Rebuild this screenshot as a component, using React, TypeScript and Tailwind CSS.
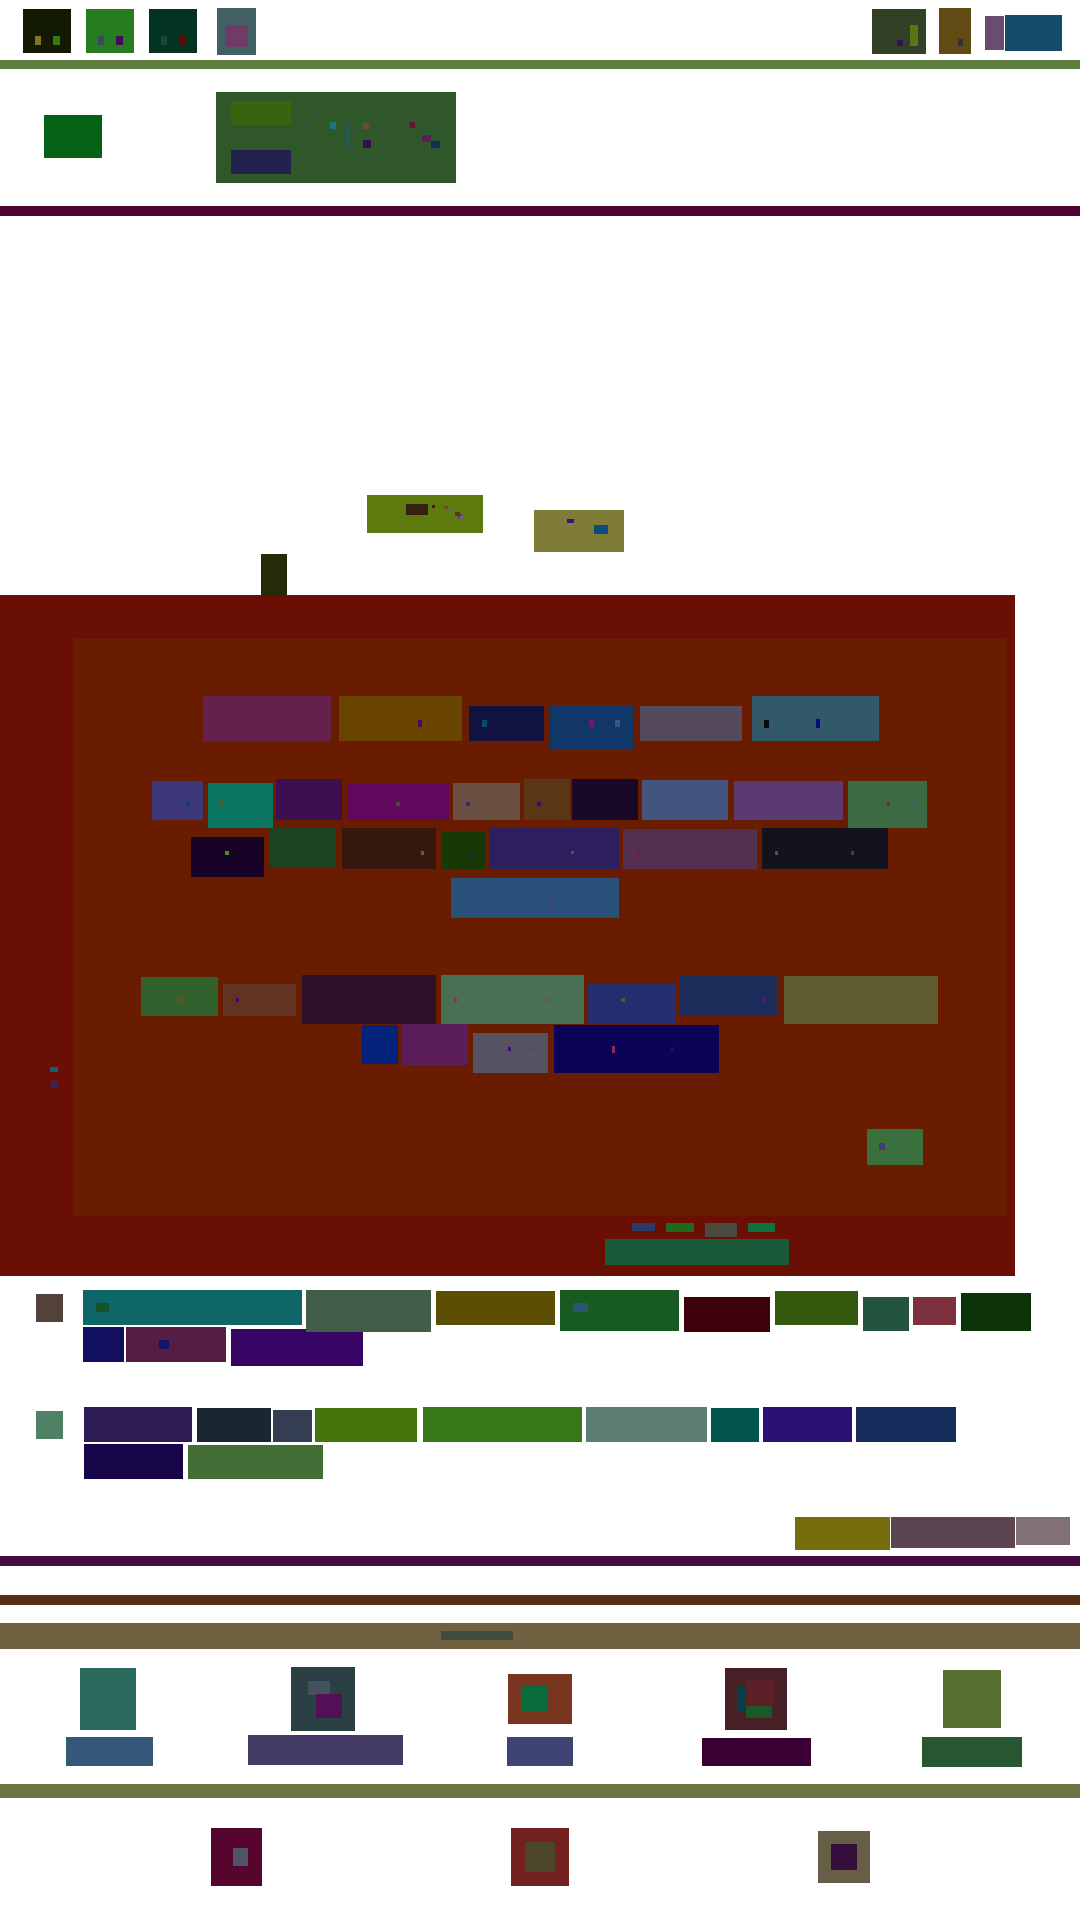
function TopBar() {
  return (
    <div className="flex h-[60px] items-start">
      <div className="relative mt-[9px] ml-[23px] h-[44px] w-[48px] bg-[#121a03]">
        <div className="absolute top-[27px] left-[12px] h-[9px] w-[6px] bg-[#7f7428]" />
        <div className="absolute top-[27px] left-[30px] h-[9px] w-[7px] bg-[#367a0c]" />
      </div>
      <div className="relative mt-[9px] ml-[15px] h-[44px] w-[48px] bg-[#257d1f]">
        <div className="absolute top-[27px] left-[12px] h-[9px] w-[6px] bg-[#3e4760]" />
        <div className="absolute top-[27px] left-[30px] h-[9px] w-[7px] bg-[#420b5c]" />
      </div>
      <div className="relative mt-[9px] ml-[15px] h-[44px] w-[48px] bg-[#033323]">
        <div className="absolute top-[27px] left-[12px] h-[9px] w-[6px] bg-[#13483f]" />
        <div className="absolute top-[27px] left-[30px] h-[9px] w-[7px] bg-[#650806]" />
      </div>
      <div className="relative mt-[8px] ml-[20px] h-[47px] w-[39px] bg-[#406064]">
        <div className="absolute top-[17px] left-[8px] h-[22px] w-[23px] bg-[#703b66]" />
      </div>
      <div className="relative mt-[9px] ml-[616px] h-[45px] w-[54px] bg-[#324125]">
        <div className="absolute top-[10px] left-[30px] h-[3px] w-[3px] bg-[#3a3a2a]" />
        <div className="absolute top-[16px] left-[38px] h-[21px] w-[8px] bg-[#5b7417]" />
        <div className="absolute top-[31px] left-[25px] h-[6px] w-[6px] bg-[#2e1259]" />
      </div>
      <div className="relative mt-[8px] ml-[13px] h-[46px] w-[32px] bg-[#614b14]">
        <div className="absolute top-[31px] left-[19px] h-[7px] w-[5px] bg-[#2b3340]" />
      </div>
      <div className="mt-[16px] ml-[14px] h-[34px] w-[19px] bg-[#6a4c6c]" />
      <div className="mt-[15px] ml-[1px] h-[36px] w-[57px] bg-[#144b6c]" />
    </div>
  );
}

function Hero() {
  return (
    <div className="flex h-[137px] items-start">
      <div className="mt-[46px] ml-[44px] h-[43px] w-[58px] bg-[#056115]" />
      <div className="relative mt-[23px] ml-[114px] h-[91px] w-[240px] bg-[#2f572a]">
        <div className="absolute top-[9px] left-[15px] h-[24px] w-[60px] bg-[#3a630e]" />
        <div className="absolute top-[58px] left-[15px] h-[24px] w-[60px] bg-[#23214f]" />
        <div className="absolute top-[31px] left-[87px] h-[4px] w-[3px] bg-[#3e4760]" />
        <div className="absolute top-[30px] left-[114px] h-[7px] w-[6px] bg-[#1f7474]" />
        <div className="absolute top-[31px] left-[129px] h-[25px] w-[4px] bg-[#1e5c5c]" />
        <div className="absolute top-[31px] left-[147px] h-[6px] w-[6px] bg-[#6e4a2e]" />
        <div className="absolute top-[48px] left-[147px] h-[8px] w-[8px] bg-[#330f52]" />
        <div className="absolute top-[30px] left-[194px] h-[6px] w-[5px] bg-[#6a1233]" />
        <div className="absolute top-[43px] left-[206px] h-[7px] w-[9px] bg-[#5a2056]" />
        <div className="absolute top-[49px] left-[215px] h-[7px] w-[9px] bg-[#0e2f5a]" />
      </div>
    </div>
  );
}

function Floaters() {
  return (
    <div className="flex h-[379px] items-start">
      <div className="relative z-10 mt-[338px] ml-[261px] h-[42px] w-[26px] bg-[#242b08]" />
      <div className="relative mt-[279px] ml-[80px] h-[38px] w-[116px] bg-[#5c7a0e]">
        <div className="absolute top-[9px] left-[39px] h-[11px] w-[22px] bg-[#36200f]" />
        <div className="absolute top-[10px] left-[65px] h-[3px] w-[3px] bg-[#5c0a2a]" />
        <div className="absolute top-[11px] left-[77px] h-[3px] w-[4px] bg-[#70501a]" />
        <div className="absolute top-[12px] left-[81px] h-[4px] w-[6px] bg-[#6b6a3a]" />
        <div className="absolute top-[19px] left-[91px] h-[4px] w-[4px] bg-[#3a4a90]" />
        <div className="absolute top-[21px] left-[93px] h-[3px] w-[3px] bg-[#7a5a80]" />
        <div className="absolute top-[17px] left-[88px] h-[4px] w-[5px] bg-[#6e2a12]" />
      </div>
      <div className="relative mt-[294px] ml-[51px] h-[42px] w-[90px] bg-[#7e7c38]">
        <div className="absolute top-[9px] left-[33px] h-[4px] w-[7px] bg-[#4a0a86]" />
        <div className="absolute top-[15px] left-[60px] h-[9px] w-[14px] bg-[#0e4b7c]" />
      </div>
    </div>
  );
}

function Panel() {
  return (
    <div className="flex h-[577px] w-[934px] flex-col bg-[#6a1c00]">
      <div className="mt-[57px] flex h-[54px] items-start">
        <div className="ml-[130px] h-[45px] w-[128px] bg-[#66204c]" />
        <div className="relative ml-[8px] h-[45px] w-[123px] bg-[#694300]">
          <div className="absolute top-[24px] left-[79px] h-[7px] w-[4px] bg-[#480c58]" />
        </div>
        <div className="relative mt-[10px] ml-[7px] h-[35px] w-[75px] bg-[#10133f]">
          <div className="absolute top-[14px] left-[13px] h-[7px] w-[5px] bg-[#0a4a6e]" />
        </div>
        <div className="relative mt-[10px] ml-[6px] h-[44px] w-[83px] bg-[#103768]">
          <div className="absolute top-[14px] left-[39px] h-[7px] w-[5px] bg-[#7e1462]" />
          <div className="absolute top-[14px] left-[65px] h-[7px] w-[5px] bg-[#38587e]" />
        </div>
        <div className="mt-[10px] ml-[7px] h-[35px] w-[102px] bg-[#554a5c]" />
        <div className="relative ml-[10px] h-[45px] w-[127px] bg-[#33586a]">
          <div className="absolute top-[24px] left-[12px] h-[8px] w-[5px] bg-[#040c0c]" />
          <div className="absolute top-[23px] left-[64px] h-[9px] w-[4px] bg-[#0a0a80]" />
        </div>
      </div>

      <div className="mt-[29px] flex h-[49px] items-start">
        <div className="relative mt-[2px] ml-[79px] h-[39px] w-[51px] bg-[#3c377a]">
          <div className="absolute top-[21px] left-[34px] h-[4px] w-[4px] bg-[#123c78]" />
        </div>
        <div className="relative mt-[4px] ml-[5px] h-[45px] w-[65px] bg-[#0a7560]">
          <div className="absolute top-[19px] left-[12px] h-[4px] w-[3px] bg-[#6b5a20]" />
        </div>
        <div className="ml-[3px] h-[41px] w-[66px] bg-[#3c0f50]" />
        <div className="relative mt-[4px] ml-[5px] h-[37px] w-[102px] bg-[#62085c]">
          <div className="absolute top-[19px] left-[49px] h-[4px] w-[4px] bg-[#504a38]" />
        </div>
        <div className="relative mt-[4px] ml-[4px] h-[37px] w-[67px] bg-[#695040]">
          <div className="absolute top-[19px] left-[13px] h-[4px] w-[4px] bg-[#2a2a80]" />
        </div>
        <div className="relative ml-[4px] h-[41px] w-[46px] bg-[#5a3516]">
          <div className="absolute top-[23px] left-[13px] h-[4px] w-[4px] bg-[#3a0a80]" />
        </div>
        <div className="ml-[2px] h-[41px] w-[66px] bg-[#1a0828]" />
        <div className="mt-[1px] ml-[4px] h-[40px] w-[86px] bg-[#43557e]" />
        <div className="mt-[2px] ml-[6px] h-[39px] w-[109px] bg-[#5a3a70]" />
        <div className="relative mt-[2px] ml-[5px] h-[47px] w-[79px] bg-[#3c6a42]">
          <div className="absolute top-[21px] left-[39px] h-[4px] w-[3px] bg-[#7a2a10]" />
          <div className="absolute top-[21px] left-[63px] h-[4px] w-[3px] bg-[#5a4a80]" />
        </div>
      </div>

      <div className="flex h-[50px] items-start">
        <div className="relative mt-[9px] ml-[118px] h-[40px] w-[73px] bg-[#170325]">
          <div className="absolute top-[14px] left-[34px] h-[4px] w-[4px] bg-[#4a8a28]" />
        </div>
        <div className="ml-[5px] h-[40px] w-[67px] bg-[#1c4224]" />
        <div className="relative ml-[6px] h-[41px] w-[94px] bg-[#36170e]">
          <div className="absolute top-[23px] left-[79px] h-[4px] w-[3px] bg-[#4a5a8a]" />
        </div>
        <div className="relative mt-[4px] ml-[5px] h-[37px] w-[44px] bg-[#163905]">
          <div className="absolute top-[19px] left-[27px] h-[4px] w-[4px] bg-[#3a1a40]" />
        </div>
        <div className="relative ml-[4px] h-[41px] w-[130px] bg-[#2d1f5e]">
          <div className="absolute top-[23px] left-[82px] h-[3px] w-[3px] bg-[#1a7a3a]" />
        </div>
        <div className="relative mt-[1px] ml-[4px] h-[40px] w-[134px] bg-[#52304e]">
          <div className="absolute top-[22px] left-[13px] h-[4px] w-[3px] bg-[#701840]" />
        </div>
        <div className="relative ml-[5px] h-[41px] w-[126px] bg-[#14121c]">
          <div className="absolute top-[23px] left-[13px] h-[4px] w-[3px] bg-[#803c30]" />
          <div className="absolute top-[23px] left-[89px] h-[4px] w-[3px] bg-[#5a2a80]" />
        </div>
      </div>

      <div className="relative ml-[378px] h-[40px] w-[168px] bg-[#2b5079]">
        <div className="absolute top-[22px] left-[100px] h-[4px] w-[3px] bg-[#6a3a60]" />
      </div>

      <div className="mt-[57px] flex h-[49px] items-start">
        <div className="relative mt-[2px] ml-[68px] h-[39px] w-[77px] bg-[#33612e]">
          <div className="absolute top-[21px] left-[38px] h-[4px] w-[4px] bg-[#7a4a1e]" />
        </div>
        <div className="relative mt-[9px] ml-[5px] h-[32px] w-[73px] bg-[#633322]">
          <div className="absolute top-[14px] left-[13px] h-[4px] w-[3px] bg-[#380870]" />
        </div>
        <div className="ml-[6px] h-[49px] w-[134px] bg-[#2c1128]" />
        <div className="relative ml-[5px] h-[49px] w-[143px] bg-[#4a7053]">
          <div className="absolute top-[23px] left-[13px] h-[4px] w-[3px] bg-[#8a3a30]" />
          <div className="absolute top-[23px] left-[104px] h-[4px] w-[3px] bg-[#7a4a4a]" />
        </div>
        <div className="relative mt-[9px] ml-[3px] h-[40px] w-[89px] bg-[#222e6e]">
          <div className="absolute top-[14px] left-[34px] h-[4px] w-[4px] bg-[#6a4a30]" />
        </div>
        <div className="relative ml-[4px] h-[41px] w-[97px] bg-[#1c2c5a]">
          <div className="absolute top-[23px] left-[82px] h-[4px] w-[3px] bg-[#4a1a80]" />
        </div>
        <div className="mt-[1px] ml-[7px] h-[48px] w-[154px] bg-[#605c30]" />
      </div>

      <div className="flex h-[49px] items-start">
        <div className="mt-[1px] ml-[289px] h-[39px] w-[36px] bg-[#05237a]" />
        <div className="ml-[4px] h-[41px] w-[66px] bg-[#5b1e5a]" />
        <div className="relative mt-[9px] ml-[5px] h-[40px] w-[75px] bg-[#565262]">
          <div className="absolute top-[14px] left-[35px] h-[4px] w-[3px] bg-[#44087e]" />
          <div className="absolute top-[14px] left-[59px] h-[4px] w-[3px] bg-[#4a4a7a]" />
        </div>
        <div className="relative mt-[1px] ml-[6px] h-[48px] w-[165px] bg-[#0a0358]">
          <div className="absolute top-[21px] left-[58px] h-[7px] w-[3px] bg-[#8a2a60]" />
          <div className="absolute top-[22px] left-[117px] h-[4px] w-[3px] bg-[#1a1a40]" />
        </div>
      </div>

      <div className="relative mt-[56px] ml-[794px] h-[36px] w-[56px] bg-[#3a703e]">
        <div className="absolute top-[14px] left-[12px] h-[7px] w-[6px] bg-[#4a3a70]" />
      </div>
    </div>
  );
}

function RedSection() {
  return (
    <div className="h-[681px] w-[1015px] bg-[#690f03] pt-[44px]">
      <div className="flex">
        <div className="flex w-[73px] flex-col">
          <div className="mt-[428px] ml-[50px] h-[5px] w-[8px] bg-[#1a5a80]" />
          <div className="mt-[9px] ml-[51px] h-[7px] w-[7px] bg-[#2a2a6a]" />
        </div>
        <Panel />
      </div>
      <div className="mt-[7px] flex h-[16px] items-start">
        <div className="ml-[632px] h-[8px] w-[23px] bg-[#2a3a6a]" />
        <div className="ml-[11px] h-[9px] w-[28px] bg-[#1f6a1a]" />
        <div className="ml-[11px] h-[14px] w-[32px] bg-[#4a4a3e]" />
        <div className="ml-[11px] h-[9px] w-[27px] bg-[#107040]" />
      </div>
      <div className="ml-[605px] h-[26px] w-[184px] bg-[#1a5a38]" />
    </div>
  );
}

function Chips() {
  return (
    <div className="flex flex-col">
      <div className="relative z-10 mt-[14px] flex h-[37px] items-start">
        <div className="mt-[4px] ml-[36px] h-[28px] w-[27px] bg-[#534239]" />
        <div className="relative ml-[20px] h-[35px] w-[219px] bg-[#0e6766]">
          <div className="absolute top-[13px] left-[13px] h-[9px] w-[13px] bg-[#165229]" />
        </div>
        <div className="ml-[4px] h-[42px] w-[125px] bg-[#425d47]" />
        <div className="mt-[1px] ml-[5px] h-[34px] w-[119px] bg-[#5c4e04]" />
        <div className="relative ml-[5px] h-[41px] w-[119px] bg-[#175a22]">
          <div className="absolute top-[13px] left-[13px] h-[9px] w-[15px] bg-[#2a5578]" />
        </div>
        <div className="mt-[7px] ml-[5px] h-[35px] w-[86px] bg-[#3e030a]" />
        <div className="mt-[1px] ml-[5px] h-[34px] w-[83px] bg-[#34580c]" />
        <div className="mt-[7px] ml-[5px] h-[34px] w-[46px] bg-[#235440]" />
        <div className="mt-[7px] ml-[4px] h-[28px] w-[43px] bg-[#7d303e]" />
        <div className="mt-[3px] ml-[5px] h-[38px] w-[70px] bg-[#0d3308]" />
      </div>
      <div className="flex h-[39px] items-start">
        <div className="ml-[83px] h-[35px] w-[41px] bg-[#120f60]" />
        <div className="relative ml-[2px] h-[35px] w-[100px] bg-[#561c42]">
          <div className="absolute top-[13px] left-[33px] h-[9px] w-[10px] bg-[#131468]" />
        </div>
        <div className="mt-[2px] ml-[5px] h-[37px] w-[132px] bg-[#350464]" />
      </div>

      <div className="mt-[41px] flex h-[37px] items-start">
        <div className="mt-[4px] ml-[36px] h-[28px] w-[27px] bg-[#4f8167]" />
        <div className="ml-[21px] h-[35px] w-[108px] bg-[#2e1c54]" />
        <div className="mt-[1px] ml-[5px] h-[34px] w-[74px] bg-[#1a2632]" />
        <div className="mt-[3px] ml-[2px] h-[32px] w-[39px] bg-[#333e52]" />
        <div className="mt-[1px] ml-[3px] h-[34px] w-[102px] bg-[#44750c]" />
        <div className="ml-[6px] h-[35px] w-[159px] bg-[#377717]" />
        <div className="ml-[4px] h-[35px] w-[121px] bg-[#5d7d74]" />
        <div className="mt-[1px] ml-[4px] h-[34px] w-[48px] bg-[#02554e]" />
        <div className="ml-[4px] h-[35px] w-[89px] bg-[#2d1076]" />
        <div className="ml-[4px] h-[35px] w-[100px] bg-[#162c5c]" />
      </div>
      <div className="flex h-[35px] items-start">
        <div className="ml-[84px] h-[35px] w-[99px] bg-[#17064a]" />
        <div className="mt-[1px] ml-[5px] h-[34px] w-[135px] bg-[#426e36]" />
      </div>

      <div className="mt-[38px] flex h-[39px] items-start">
        <div className="ml-[795px] h-[33px] w-[95px] bg-[#756c0b]" />
        <div className="ml-[1px] h-[31px] w-[124px] bg-[#5c4450]" />
        <div className="ml-[1px] h-[28px] w-[54px] bg-[#817076]" />
      </div>
    </div>
  );
}

function Columns() {
  return (
    <div className="mt-[18px] flex h-[117px] items-start">
      <div className="ml-[66px] flex w-[87px] flex-col">
        <div className="mt-[1px] ml-[14px] h-[62px] w-[56px] bg-[#2a6a5d]" />
        <div className="mt-[7px] h-[29px] w-[87px] bg-[#34577a]" />
      </div>
      <div className="ml-[95px] flex w-[155px] flex-col">
        <div className="relative ml-[43px] h-[64px] w-[64px] bg-[#2a4042]">
          <div className="absolute top-[14px] left-[17px] h-[14px] w-[22px] bg-[#445260]" />
          <div className="absolute top-[27px] left-[25px] h-[24px] w-[26px] bg-[#530f58]" />
        </div>
        <div className="mt-[4px] h-[30px] w-[155px] bg-[#433b66]" />
      </div>
      <div className="ml-[104px] flex w-[66px] flex-col">
        <div className="relative mt-[7px] ml-[1px] h-[50px] w-[64px] bg-[#783520]">
          <div className="absolute top-[12px] left-[13px] h-[26px] w-[26px] bg-[#0a6c3d]" />
        </div>
        <div className="mt-[13px] h-[29px] w-[66px] bg-[#3e4473]" />
      </div>
      <div className="ml-[129px] flex w-[109px] flex-col">
        <div className="relative mt-[1px] ml-[23px] h-[62px] w-[62px] bg-[#472025]">
          <div className="absolute top-[18px] left-[12px] h-[26px] w-[9px] bg-[#083d4a]" />
          <div className="absolute top-[12px] left-[21px] h-[26px] w-[29px] bg-[#5b2027]" />
          <div className="absolute top-[38px] left-[21px] h-[12px] w-[26px] bg-[#1b5727]" />
        </div>
        <div className="mt-[8px] h-[28px] w-[109px] bg-[#3a0034]" />
      </div>
      <div className="ml-[111px] flex w-[100px] flex-col">
        <div className="mt-[3px] ml-[21px] h-[58px] w-[58px] bg-[#587030]" />
        <div className="mt-[9px] h-[30px] w-[100px] bg-[#265732]" />
      </div>
    </div>
  );
}

export default function App() {
  return (
    <div className="flex h-[1920px] w-[1080px] flex-col overflow-hidden bg-white">
      <TopBar />
      <div className="h-[9px] bg-[#5e7d3f]" />
      <Hero />
      <div className="h-[10px] bg-[#50022e]" />
      <Floaters />
      <RedSection />
      <Chips />
      <div className="h-[10px] bg-[#460d3f]" />
      <div className="mt-[29px] h-[10px] bg-[#562f15]" />
      <div className="mt-[18px] h-[26px] bg-[#706240] pt-[8px]">
        <div className="ml-[441px] h-[9px] w-[72px] bg-[#404c40]" />
      </div>
      <Columns />
      <div className="h-[14px] bg-[#6c7645]" />
      <div className="mt-[30px] flex items-start">
        <div className="relative ml-[211px] h-[58px] w-[51px] bg-[#56062e]">
          <div className="absolute top-[20px] left-[22px] h-[18px] w-[15px] bg-[#50546a]" />
        </div>
        <div className="relative ml-[249px] h-[58px] w-[58px] bg-[#732020]">
          <div className="absolute top-[14px] left-[14px] h-[30px] w-[30px] bg-[#4c4628]" />
        </div>
        <div className="relative mt-[3px] ml-[249px] h-[52px] w-[52px] bg-[#685e48]">
          <div className="absolute top-[13px] left-[13px] h-[26px] w-[26px] bg-[#340f3c]" />
        </div>
      </div>
    </div>
  );
}
